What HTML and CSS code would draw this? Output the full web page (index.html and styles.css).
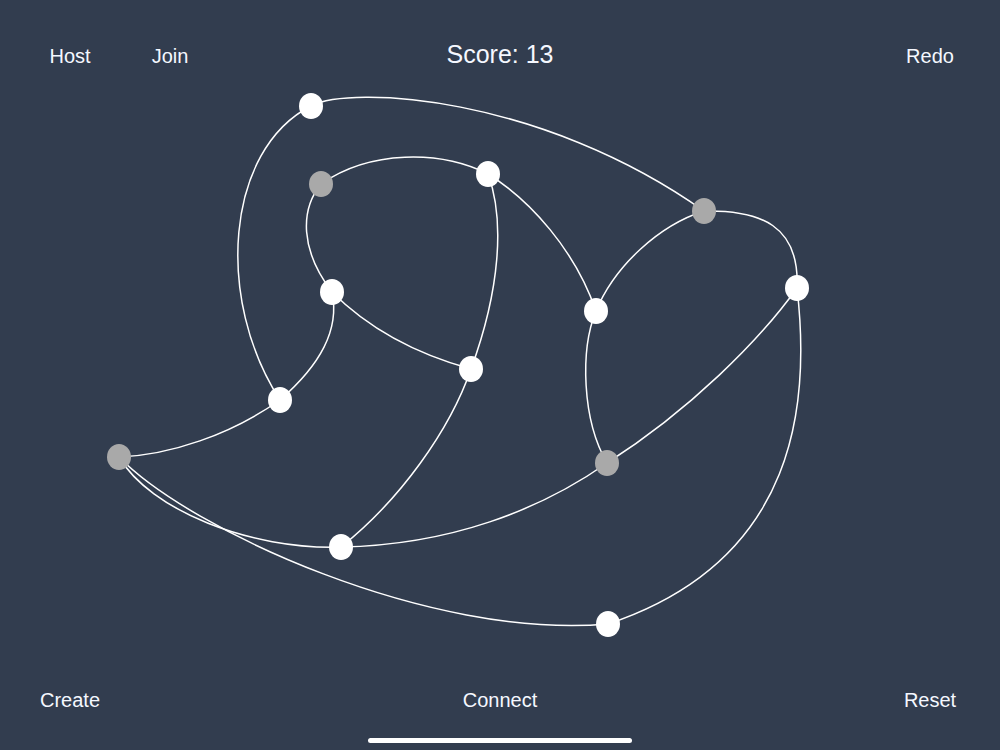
FILE: index.html
```html
<!DOCTYPE html>
<html lang="en">
<head>
<meta charset="utf-8">
<title>Graph Game</title>
<link rel="stylesheet" href="styles.css">
</head>
<body>
<div class="screen">
  <header class="topbar">
    <button class="btn">Host</button>
    <button class="btn">Join</button>
    <div class="score">Score: 13</div>
    <div></div>
    <button class="btn">Redo</button>
  </header>
  <main class="board">
    <svg class="graph" viewBox="0 80 1000 600" width="1000" height="600" xmlns="http://www.w3.org/2000/svg">
      <g class="edges">
        <path d="M311,106 C350,85 540,95 704,211"/>
        <path d="M311,106 C225,150 215,300 280,400"/>
        <path d="M321,184 C370,150 440,150 488,174"/>
        <path d="M321,184 C300,210 300,250 332,292"/>
        <path d="M332,292 C340,330 320,365 280,400"/>
        <path d="M332,292 C370,330 420,355 471,369"/>
        <path d="M488,174 C505,220 500,290 471,369"/>
        <path d="M488,174 C530,200 575,250 596,311"/>
        <path d="M704,211 C660,225 615,265 596,311"/>
        <path d="M704,211 C760,210 800,225 797,288"/>
        <path d="M596,311 C580,350 582,420 607,463"/>
        <path d="M797,288 C760,340 690,410 607,463"/>
        <path d="M797,288 C810,400 800,560 608,624"/>
        <path d="M471,369 C450,430 400,500 341,547"/>
        <path d="M280,400 C230,435 170,455 119,457"/>
        <path d="M119,457 C150,510 250,550 341,547"/>
        <path d="M119,457 C190,530 430,640 608,624"/>
        <path d="M607,463 C540,510 450,545 341,547"/>
      </g>
      <g class="nodes">
        <ellipse class="node" cx="311" cy="106" rx="12" ry="13"/>
        <ellipse class="node fixed" cx="321" cy="184" rx="12" ry="13"/>
        <ellipse class="node" cx="488" cy="174" rx="12" ry="13"/>
        <ellipse class="node fixed" cx="704" cy="211" rx="12" ry="13"/>
        <ellipse class="node" cx="797" cy="288" rx="12" ry="13"/>
        <ellipse class="node" cx="332" cy="292" rx="12" ry="13"/>
        <ellipse class="node" cx="596" cy="311" rx="12" ry="13"/>
        <ellipse class="node" cx="471" cy="369" rx="12" ry="13"/>
        <ellipse class="node" cx="280" cy="400" rx="12" ry="13"/>
        <ellipse class="node fixed" cx="119" cy="457" rx="12" ry="13"/>
        <ellipse class="node fixed" cx="607" cy="463" rx="12" ry="13"/>
        <ellipse class="node" cx="341" cy="547" rx="12" ry="13"/>
        <ellipse class="node" cx="608" cy="624" rx="12" ry="13"/>
      </g>
    </svg>
  </main>
  <footer class="bottombar">
    <div class="actions">
      <button class="btn">Create</button>
      <button class="btn">Connect</button>
      <button class="btn">Reset</button>
    </div>
    <div class="home-indicator"></div>
  </footer>
</div>
</body>
</html>
```
FILE: styles.css
```css
html, body {
  margin: 0;
  padding: 0;
  background: #323d4f;
}

.screen {
  width: 1000px;
  height: 750px;
  display: flex;
  flex-direction: column;
  overflow: hidden;
  font-family: "Liberation Sans", Arial, sans-serif;
  color: #ffffff;
}

.btn {
  background: none;
  border: 0;
  padding: 0;
  margin: 0;
  font-family: inherit;
  font-size: 20px;
  line-height: 24px;
  color: #f5f8ff;
  text-align: center;
  cursor: pointer;
}

.topbar {
  height: 80px;
  box-sizing: border-box;
  padding: 40px 20px 0;
  display: grid;
  grid-template-columns: 100px 100px 1fr 100px 100px;
  align-items: baseline;
}

.score {
  font-size: 25px;
  line-height: 28px;
  text-align: center;
  color: #f5f8ff;
}

.board {
  height: 600px;
  display: flex;
}

.graph {
  display: block;
  width: 1000px;
  height: 600px;
  overflow: visible;
}

.edges path {
  fill: none;
  stroke: #ffffff;
  stroke-width: 1.5;
}

.node {
  fill: #ffffff;
}

.node.fixed {
  fill: #a9a9a9;
}

.bottombar {
  height: 70px;
  box-sizing: border-box;
  padding-top: 8px;
  display: flex;
  flex-direction: column;
  align-items: center;
}

.actions {
  width: 100%;
  box-sizing: border-box;
  padding: 0 20px;
  display: grid;
  grid-template-columns: 100px 1fr 100px;
}

.home-indicator {
  width: 264px;
  height: 5px;
  margin-top: 26px;
  border-radius: 3px;
  background: #ffffff;
}
```
